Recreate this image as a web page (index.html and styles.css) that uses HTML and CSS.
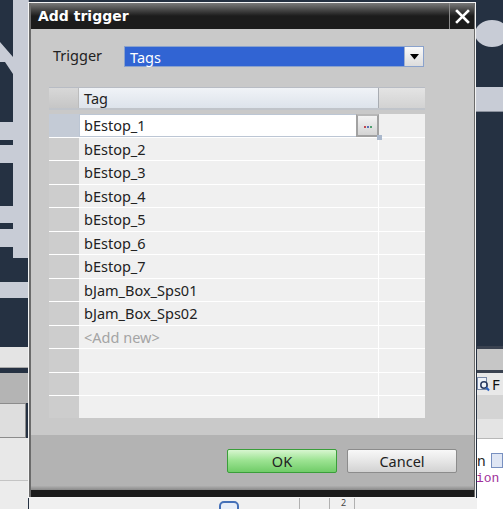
FILE: index.html
```html
<!DOCTYPE html>
<html lang="en">
	<head>
		<meta charset="UTF-8" />
		<title>Add trigger</title>
		<link rel="stylesheet" href="styles.css">
	</head>
	<body>
		<div class="desktop">
			<!-- background window pieces -->
			<div class="bg-strip"></div>
			<div class="bg-bar" style="top: 122px; height: 18px"></div>
			<div class="bg-bar" style="top: 145px; height: 18px"></div>
			<div class="bg-bar" style="top: 206px; height: 17px"></div>
			<div class="bg-bar" style="top: 229px; height: 18px"></div>
			<div class="bg-band"></div>
			<svg class="bg-arrow" width="14" height="40" viewBox="0 0 14 40"><polygon points="0,2 13,17 13,34 5,22 0,22" fill="#c8ccd6" /></svg>
			<div class="bg-circle"></div>
			<div class="bg-right-band"></div>

			<div class="bg-left-bottom">
				<div class="lb-a"></div>
				<div class="lb-b"></div>
				<div class="lb-c"></div>
				<div class="lb-d"></div>
				<div class="lb-e"></div>
				<div class="lb-f"></div>
			</div>

			<div class="bg-right-bottom">
				<div class="rb-a"></div>
				<div class="rb-b"></div>
				<div class="rb-c">
					<svg width="13" height="15" viewBox="0 0 13 15"><rect x="0.5" y="0.5" width="9" height="12" fill="#eef2f8" stroke="#7a8aa8" /><circle cx="7" cy="8" r="3.2" fill="none" stroke="#2a3a60" stroke-width="1.5" /><line x1="9.3" y1="10.4" x2="12" y2="13.5" stroke="#2a60c0" stroke-width="2" /></svg>
					<span>F</span>
				</div>
				<div class="rb-d"></div>
				<div class="rb-e"></div>
				<div class="rb-f">
					<div class="rb-line"><span>n</span><i class="rb-icon"></i></div>
					<div class="rb-code">ion</div>
				</div>
			</div>

			<div class="bg-bottom">
				<i class="bb-blob"></i>
				<i class="bb-sep" style="left: 270px"></i>
				<i class="bb-sep" style="left: 300px"></i>
				<i class="bb-sep" style="left: 325px"></i>
				<span class="bb-num">2</span>
			</div>

			<div class="dialog">
				<div class="frame">
					<div class="titlebar">
						<span class="title">Add trigger</span>
						<span class="close"><svg width="15" height="15" viewBox="0 0 15 15"><path d="M2 2 L13 13 M13 2 L2 13" stroke="#fff" stroke-width="2.6" stroke-linecap="square" /></svg></span>
					</div>

					<div class="dialog-body">
						<div class="field-row">
							<span class="field-label">Trigger</span>
							<div class="select">
								<span class="select-value">Tags</span>
								<span class="select-btn"><svg width="9" height="6" viewBox="0 0 9 6"><polygon points="0,0 9,0 4.5,5.5" fill="#000" /></svg></span>
							</div>
						</div>

						<div class="grid">
							<div class="grid-head">
								<div class="hcell corner"></div>
								<div class="hcell name">Tag</div>
								<div class="hcell extra"></div>
							</div>
							<div class="grid-rows" id="rows"></div>
						</div>
					</div>

					<div class="dialog-footer">
						<button class="btn btn-ok">OK</button>
						<button class="btn">Cancel</button>
					</div>
					<div class="dialog-bottom"></div>
				</div>
			</div>
		</div>

		<script>
			const tags = ["bEstop_1", "bEstop_2", "bEstop_3", "bEstop_4", "bEstop_5", "bEstop_6", "bEstop_7", "bJam_Box_Sps01", "bJam_Box_Sps02"];
			const rows = document.getElementById("rows");
			let html = "";
			tags.forEach(function (tag, i) {
				if (i === 0) {
					html += `<div class="row"><div class="rcell corner selected"></div><div class="rcell name editing"><span class="edit-text">${tag}</span><span class="dots-btn"><i></i><i></i><i></i></span><span class="grip"></span></div><div class="rcell extra"></div></div>`;
				} else {
					html += `<div class="row"><div class="rcell corner"></div><div class="rcell name">${tag}</div><div class="rcell extra"></div></div>`;
				}
			});
			html += `<div class="row"><div class="rcell corner"></div><div class="rcell name add-new">&lt;Add new&gt;</div><div class="rcell extra"></div></div>`;
			for (let i = 0; i < 4; i++) {
				html += `<div class="row"><div class="rcell corner"></div><div class="rcell name"></div><div class="rcell extra"></div></div>`;
			}
			rows.innerHTML = html;
		</script>
	</body>
</html>
```

FILE: styles.css
```css
html, body {
	margin: 0;
	padding: 0;
}
body {
	width: 503px;
	height: 509px;
	overflow: hidden;
	background: #253142;
	font-family: "Noto Sans", "Open Sans", sans-serif;
	font-size: 14.5px;
	color: #222;
}
.desktop {
	position: relative;
	width: 503px;
	height: 509px;
}

/* background */
.bg-strip {
	position: absolute;
	left: 13px;
	top: 0;
	width: 15px;
	height: 258px;
	background: #c8ccd6;
	border-right: 1px solid #a8adb8;
}
.bg-bar {
	position: absolute;
	left: 0;
	width: 13px;
	background: #c8ccd6;
}
.bg-band {
	position: absolute;
	left: 0;
	top: 282px;
	width: 28px;
	height: 16px;
	background: #c8ccd6;
}
.bg-arrow {
	position: absolute;
	left: 0;
	top: 40px;
}
.bg-circle {
	position: absolute;
	left: 475px;
	top: 20px;
	width: 34px;
	height: 27px;
	border-radius: 50%;
	background: #c8ccd6;
}
.bg-right-band {
	position: absolute;
	left: 476px;
	top: 87px;
	width: 27px;
	height: 24px;
	background: #c8ccd6;
	border-bottom: 1px solid #8a909c;
}
.bg-left-bottom {
	position: absolute;
	left: 0;
	top: 347px;
	width: 28px;
	display: flex;
	flex-direction: column;
}
.lb-a {
	height: 20px;
	background: #e4e4e4;
	border-bottom: 1px solid #a8a8a8;
}
.lb-b {
	height: 5px;
	background: #253142;
}
.lb-c {
	height: 30px;
	background: #b4b4b4;
}
.lb-d {
	height: 33px;
	width: 25px;
	background: #dedede;
	border: 1px solid #8c8c8c;
	border-left: none;
}
.lb-e {
	height: 42px;
	background: #e8e8e8;
	border-bottom: 1px solid #c4c4c4;
}
.lb-f {
	height: 30px;
	background: #ececec;
}
.bg-right-bottom {
	position: absolute;
	left: 477px;
	top: 346px;
	width: 26px;
	height: 163px;
	display: flex;
	flex-direction: column;
	background: #fff;
}
.rb-a {
	height: 3px;
	background: #3a4250;
}
.rb-b {
	height: 21px;
	background: #c6c6c6;
	border-bottom: 3px solid #3a4250;
}
.rb-c {
	height: 22px;
	background: #e8e8e8;
	display: flex;
	align-items: center;
	gap: 2px;
	font-size: 15px;
	color: #111;
}
.rb-d {
	height: 24px;
	background: #d4d4d4;
}
.rb-e {
	height: 19px;
	background: #e4e4e4;
	border-bottom: 1px solid #b8b8b8;
}
.rb-f {
	flex: 1;
	background: #fff;
	padding-top: 10px;
}
.rb-line {
	display: flex;
	align-items: center;
	gap: 5px;
	height: 22px;
	font-size: 14px;
}
.rb-icon {
	display: block;
	width: 10px;
	height: 13px;
	background: #dfe6f4;
	border: 1px solid #7890c0;
}
.rb-code {
	font-family: "Liberation Mono", monospace;
	font-size: 13px;
	color: #a0309a;
	margin-left: -1px;
}
.bg-bottom {
	position: absolute;
	left: 29px;
	top: 498px;
	width: 448px;
	height: 11px;
	background: #f0f0f0;
}
.bb-blob {
	position: absolute;
	left: 190px;
	top: 3px;
	width: 16px;
	height: 10px;
	border: 2px solid #4470b8;
	border-radius: 5px;
	background: #e8eef8;
}
.bb-sep {
	position: absolute;
	top: 0;
	width: 1px;
	height: 11px;
	background: #b0b0b0;
}
.bb-num {
	position: absolute;
	left: 312px;
	top: 0;
	font-size: 9px;
	line-height: 10px;
	color: #444;
}

/* dialog */
.dialog {
	position: absolute;
	left: 28px;
	top: 2px;
	width: 446px;
	height: 494px;
	border: 1px solid #f4f4f4;
	background: #6b6b6b;
}
.frame {
	display: flex;
	flex-direction: column;
	height: 100%;
	border-left: 2px solid #6b6b6b;
	border-right: 1px solid #6b6b6b;
	box-sizing: border-box;
}
.titlebar {
	height: 26px;
	display: flex;
	align-items: center;
	justify-content: space-between;
	background: linear-gradient(#7a7a7a 0%, #4a4a4a 25%, #1c1c1c 50%, #1c1c1c 100%);
}
.title {
	font-family: "DejaVu Sans", sans-serif;
	font-weight: bold;
	font-size: 14px;
	color: #fff;
	padding-left: 7px;
	padding-bottom: 1px;
}
.close {
	width: 25px;
	height: 26px;
	box-sizing: border-box;
	border-left: 1px solid #8a8a8a;
	display: flex;
	align-items: center;
	justify-content: center;
	padding-top: 1px;
}
.dialog-body {
	height: 406px;
	background: #c9c9c9;
	padding: 17px 0 0 18px;
	box-sizing: border-box;
}
.field-row {
	display: flex;
	align-items: center;
	height: 21px;
}
.field-label {
	width: 75px;
	padding-left: 4px;
	box-sizing: border-box;
	margin-top: -3px;
}
.select {
	width: 300px;
	height: 21px;
	box-sizing: border-box;
	border: 1px solid #8aa2cc;
	background: #3164d3;
	display: flex;
	align-items: center;
	justify-content: space-between;
}
.select-value {
	color: #fff;
	padding-left: 5px;
}
.select-btn {
	width: 19px;
	height: 19px;
	box-sizing: border-box;
	border-left: 1px solid #a0b0cc;
	background: linear-gradient(#fafafa, #dcdcdc);
	display: flex;
	align-items: center;
	justify-content: center;
}
.grid {
	margin-top: 20px;
	width: 376px;
	height: 331px;
	overflow: hidden;
	background: #f0f0f0;
}
.grid-head {
	display: flex;
	height: 23px;
	border-top: 1px solid #b8bcc4;
	border-bottom: 2px solid #c0c4ca;
	box-sizing: border-box;
}
.hcell {
	height: 100%;
	box-sizing: border-box;
}
.hcell.corner {
	width: 30px;
	background: linear-gradient(#d8d8d8, #c6c6c6);
	border-right: 1px solid #bcbcbc;
}
.hcell.name {
	width: 300px;
	background: linear-gradient(#f0f3f7, #dde3eb);
	border-right: 1px solid #a8acb2;
	padding-left: 5px;
	line-height: 21px;
}
.hcell.extra {
	flex: 1;
	background: linear-gradient(#e4e4e4, #d2d2d2);
}
.grid-rows {
	padding-top: 4px;
	background: #c9c9c9;
}
.row {
	display: flex;
	height: 23.5px;
	box-sizing: border-box;
	border-bottom: 1px solid #fff;
}
.rcell {
	height: 100%;
	box-sizing: border-box;
}
.rcell.corner {
	width: 30px;
	background: #cdcdcd;
}
.rcell.corner.selected {
	background: #c4cbd6;
}
.rcell.name {
	width: 300px;
	background: #f0f0f0;
	border-right: 1px solid #fff;
	padding-left: 5px;
	display: flex;
	align-items: center;
	white-space: nowrap;
}
.rcell.extra {
	flex: 1;
	background: #f0f0f0;
}
.add-new {
	color: #a4a4a4;
}
.rcell.name.editing {
	position: relative;
	background: #fff;
	border: 1px solid #bcc6d4;
	padding-left: 4px;
	justify-content: space-between;
	padding-right: 0;
}
.dots-btn {
	width: 23px;
	height: 23px;
	margin-top: 1px;
	margin-right: -1px;
	box-sizing: border-box;
	border: 2px solid #a2a2a2;
	border-top-color: #b8b8b8;
	background: linear-gradient(#f4f4f4, #d4d4d4);
	display: flex;
	align-items: center;
	justify-content: center;
	gap: 1px;
	padding-top: 2px;
}
.dots-btn i {
	display: block;
	width: 2px;
	height: 2px;
	background: #c04850;
}
.dots-btn i:nth-child(2) {
	background: #5a70b8;
}
.dots-btn i:nth-child(3) {
	background: #50a070;
}
.grip {
	position: absolute;
	right: -4px;
	bottom: -4px;
	width: 5px;
	height: 5px;
	background: #aab8cc;
}
.dialog-footer {
	height: 55px;
	display: flex;
	justify-content: flex-end;
	align-items: flex-start;
	gap: 10px;
	padding: 14px 17px 0 0;
	box-sizing: border-box;
	background: linear-gradient(#b3b3b3 0%, #b3b3b3 92%, #8a8a8a 100%);
}
.btn {
	width: 110px;
	height: 24px;
	border: 1px solid #8c8c8c;
	border-radius: 2px;
	background: linear-gradient(#f8f8f8, #e6e6e6 50%, #d2d2d2);
	font-family: "Noto Sans", "Open Sans", sans-serif;
	font-size: 14.5px;
	color: #222;
	padding: 0;
	line-height: 20px;
}
.btn-ok {
	border-color: #3a9e3a;
	background: linear-gradient(#d8f6d0, #9ee494 45%, #70cc68);
}
.dialog-bottom {
	flex: 1;
	background: #1c1c1c;
}
```
